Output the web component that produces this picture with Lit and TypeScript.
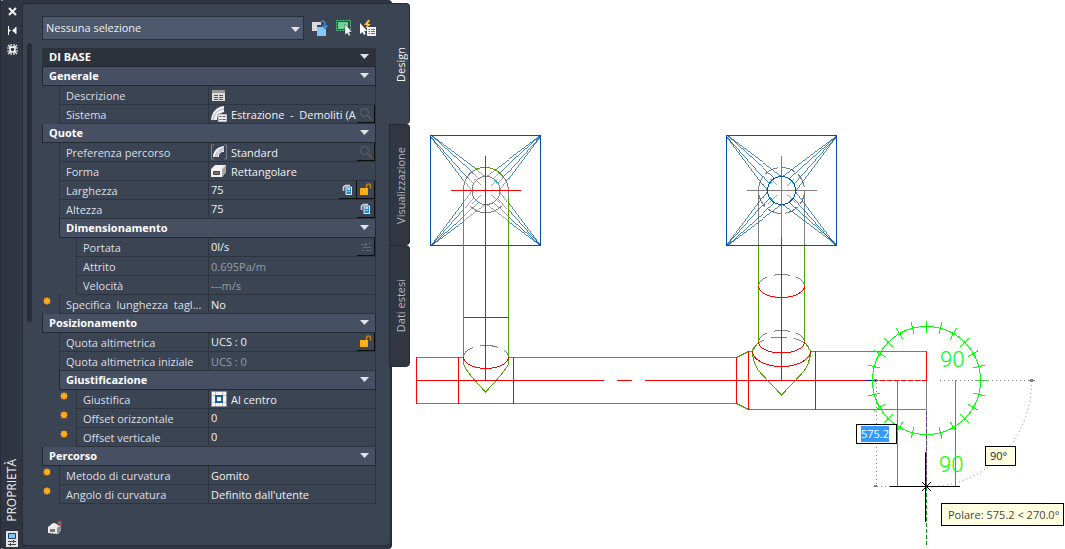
import { LitElement, html, svg, css, nothing } from "lit";
import { customElement, state } from "lit/decorators.js";
import { classMap } from "lit/directives/class-map.js";

type Row = {
  kind: "title" | "section" | "item";
  level: 1 | 2;
  label: string;
  value?: string;
  icon?: string;
  star?: boolean;
  editable?: boolean;
  readonly?: boolean;
  actions?: string[];
};

const ROWS: Row[] = [
  { kind: "title", level: 1, label: "DI BASE" },
  { kind: "section", level: 1, label: "Generale" },
  { kind: "item", level: 1, label: "Descrizione", icon: "sheet" },
  { kind: "item", level: 1, label: "Sistema", value: "Estrazione  -  Demoliti (A", icon: "system", actions: ["search"] },
  { kind: "section", level: 1, label: "Quote" },
  { kind: "item", level: 1, label: "Preferenza percorso", value: "Standard", icon: "route", actions: ["search"] },
  { kind: "item", level: 1, label: "Forma", value: "Rettangolare", icon: "box" },
  { kind: "item", level: 1, label: "Larghezza", value: "75", editable: true, actions: ["calc", "lock"] },
  { kind: "item", level: 1, label: "Altezza", value: "75", editable: true, actions: ["calc"] },
  { kind: "section", level: 2, label: "Dimensionamento" },
  { kind: "item", level: 2, label: "Portata", value: "0l/s", editable: true, actions: ["flow"] },
  { kind: "item", level: 2, label: "Attrito", value: "0.695Pa/m", readonly: true },
  { kind: "item", level: 2, label: "Velocità", value: "---m/s", readonly: true },
  { kind: "item", level: 1, label: "Specifica  lunghezza  tagl...", value: "No", star: true },
  { kind: "section", level: 1, label: "Posizionamento" },
  { kind: "item", level: 1, label: "Quota altimetrica", value: "UCS : 0", editable: true, actions: ["lock"] },
  { kind: "item", level: 1, label: "Quota altimetrica iniziale", value: "UCS : 0", readonly: true },
  { kind: "section", level: 2, label: "Giustificazione" },
  { kind: "item", level: 2, label: "Giustifica", value: "Al centro", icon: "center", star: true },
  { kind: "item", level: 2, label: "Offset orizzontale", value: "0", editable: true, star: true },
  { kind: "item", level: 2, label: "Offset verticale", value: "0", editable: true, star: true },
  { kind: "section", level: 1, label: "Percorso" },
  { kind: "item", level: 1, label: "Metodo di curvatura", value: "Gomito", star: true },
  { kind: "item", level: 1, label: "Angolo di curvatura", value: "Definito dall'utente", star: true },
];

const ACTION_NAMES: Record<string, string> = {
  search: "Cerca",
  calc: "Calcola",
  lock: "Blocca",
  flow: "Calcola portata",
};

const caret = () => html`<svg width="9" height="5" viewBox="0 0 9 5" aria-hidden="true"><path d="M0 0h9L4.500 5z" fill="#dfe2e8"/></svg>`;

const star = () => html`<svg width="8" height="8" viewBox="0 0 8 8" aria-hidden="true">
  <path d="M4 0v8M0 4h8M1 1l6 6M7 1l-6 6" stroke="#f0861a" stroke-width="1"/><circle cx="4" cy="4" r="3" fill="#ffae1a"/></svg>`;

const icon = (name: string) => {
  switch (name) {
    case "sheet":
      return html`<svg width="16" height="16" viewBox="0 0 16 16" aria-hidden="true"><path d="M1 3h13v11H1z" fill="#dcdcdc"/><path d="M1 3h13v3H1z" fill="#9a9a9a"/><path d="M3 8.500h4M8 8.500h4M3 10.500h4M8 10.500h4M3 12.500h4M8 12.500h4" stroke="#555"/></svg>`;
    case "system":
      return html`<svg width="16" height="16" viewBox="0 0 16 16" aria-hidden="true"><path d="M0 14C1 6 5 1 13 0v6C9 7 6 10 6 14z" fill="#f1f1f1"/><path d="M2 14C3 8 6 4 13 3" fill="none" stroke="#a9adb3"/><path d="M7 8h9v8H7z" fill="#f1f1f1" stroke="#55585e" stroke-width=".6"/><path d="M8.500 10.500h2M11.500 10.500h3M8.500 13.500h2M11.500 13.500h3" stroke="#555"/></svg>`;
    case "route":
      return html`<svg width="16" height="16" viewBox="0 0 16 16" aria-hidden="true"><path d="M3 1H.5v14H3M13 1h2.500v14H13" fill="none" stroke="#777e89"/><path d="M2 13C2 7 6 3 13 2v6c-4 0-5 2-5 5z" fill="#f1f1f1"/><path d="M4 13C5 9 7 6 13 4M6 13c0-3 3-6 7-7" fill="none" stroke="#a0a4ab"/></svg>`;
    case "box":
      return html`<svg width="16" height="16" viewBox="0 0 16 16" aria-hidden="true"><path d="M0 6l4-4h11v7l-4 5H0z" fill="#f1f1f1"/><path d="M11 6l4-4v7l-4 5z" fill="#a6a6a6"/><path d="M2.500 8.500h6v3h-6z" fill="#747474" stroke="#444"/></svg>`;
    case "center":
      return html`<svg width="16" height="16" viewBox="0 0 16 16" aria-hidden="true"><path d="M.5.5h15v15H.5z" fill="#f5f5f5" stroke="#8f8f8f"/><path d="M1 4.500h14M1 11.500h14M4.500 1v14M11.500 1v14" stroke="#c3c3c3"/><path d="M5 5h6v6H5z" fill="#fff" stroke="#17619c" stroke-width="2"/></svg>`;
    case "search":
      return html`<svg width="14" height="14" viewBox="0 0 14 14" aria-hidden="true"><circle cx="5.500" cy="5.500" r="4" fill="none" stroke="#5c636e"/><path d="M8.500 8.500l4 4" stroke="#6b5d55" stroke-width="1.500"/></svg>`;
    case "calc":
      return html`<svg width="11" height="11" viewBox="0 0 11 11" aria-hidden="true"><path d="M1.500 7V3l2-1.500H8" fill="none" stroke="#d2d2d2" stroke-width="1.600"/><path d="M4 3h5.500v7.500H4z" fill="#1e88d8" stroke="#e8f2fa"/><path d="M5.500 5H8" stroke="#fff" stroke-width="1.400"/><path d="M5.500 7.500H8" stroke="#bfe0fa" stroke-dasharray="1 .5"/></svg>`;
    case "lock":
      return html`<svg width="13" height="13" viewBox="0 0 13 13" aria-hidden="true"><path d="M7.500 6V3a2 2 0 0 1 4 0v2.500" fill="none" stroke="#c9830b" stroke-width="1.500"/><path d="M1 5h8v7H1z" fill="#ffab08"/><path d="M5 7v3" stroke="#ffe0a0"/></svg>`;
    case "flow":
      return html`<svg width="12" height="12" viewBox="0 0 12 12" aria-hidden="true"><path d="M1 3.500h6M5 1.500l2 2-2 2M3 6.500h8M6 9.500h5M2 9.500h2M8.500 2.500H11" fill="none" stroke="#636a75"/></svg>`;
    default:
      return nothing;
  }
};

/** Lines from a diffuser's corners to its round neck. */
const rays = (cx: number, cy: number) => {
  const out: string[] = [];
  for (const sx of [-1, 1])
    for (const sy of [-1, 1])
      for (const a of [0, 30, 60, 90]) {
        const t = (a * Math.PI) / 180;
        out.push(`M${cx + sx * 55} ${cy + sy * 55}L${(cx + sx * 14 * Math.cos(t)).toFixed(1)} ${(cy + sy * 14 * Math.sin(t)).toFixed(1)}`);
      }
  return out.join("");
};

const compassTicks = () => {
  const out: string[] = [];
  for (let a = 0; a < 360; a += 15) {
    if (a === 90 || a === 180) continue;
    const t = (a * Math.PI) / 180;
    out.push(
      `M${(926.5 + 48 * Math.cos(t)).toFixed(1)} ${(380.5 + 48 * Math.sin(t)).toFixed(1)}L${(926.5 + 60 * Math.cos(t)).toFixed(1)} ${(380.5 + 60 * Math.sin(t)).toFixed(1)}`
    );
  }
  return out.join("");
};

const neckMarks = (cx: number) =>
  `M${cx - 5} 185l-7-6M${cx + 5} 185l7-6M${cx - 5} 195l-9 8M${cx + 5} 195l9 8`;

const drawing = () => svg`
  <defs>
    <clipPath id="riser"><path d="M464 245V190a22 22 0 0 1 44 0v55z"/></clipPath>
  </defs>
  <g class="line" shape-rendering="crispEdges">
    <!-- left diffuser -->
    <g class="blue"><path d="M430.500 135.500h110v110h-110z"/><path class="fine" d="${rays(485.5, 190.5)}"/></g>
    <path d="M464 245V190a22 22 0 0 1 44 0v55z" fill="#fff" stroke="none"/>
    <g class="gray">
      <path class="fine" d="${rays(485.5, 190.5)}" clip-path="url(#riser)"/>
      <path class="fine" d="${neckMarks(485.5)}"/>
      <circle cx="486" cy="190.500" r="14"/>
      <path d="M463.500 198V190a22.500 22.500 0 0 1 13-21M508.500 198V190a22.500 22.500 0 0 0-6-14M470 206q15 14 32 0"/>
      <path d="M463.500 357a22.500 11.500 0 0 1 45 0" stroke-dasharray="14 7 18 7"/>
    </g>
    <path class="cyan" d="M478 202l4 2M494 180l3 3M489 204l4-1"/>
    <g class="green">
      <path d="M476.500 169a22.500 22.500 0 0 1 26 7M463.500 198V364q2 7 22 28q20-21 23-28V198"/>
      <path d="M416.500 357.500h47M508.500 357.500h228l12-6h4M416.500 403.500h320l12 6h178M810.500 351.500h116"/>
    </g>
    <g class="red">
      <path d="M451 190.500h70M485.500 156v225M463.500 245.500h45M463.500 317.500h45M463.500 357a22.500 11.500 0 0 0 45 0"/>
      <path d="M416.500 357v47M458.500 357v47M513.500 357v47M736.500 357v47M748.500 351v59M815.500 351v59M926.500 351v30"/>
      <path d="M416 380.500h188M617 380.500h15M645 380.500h281"/>
    </g>
    <!-- right diffuser -->
    <g class="gray">
      <path d="M747 190.500h70M781.500 156v82M758.500 190v55M804.500 190v55"/>
      <circle cx="781.500" cy="190.500" r="23" stroke-dasharray="14 4"/>
      <path class="fine" d="${neckMarks(781.5)}"/>
      <path d="M758.500 286a23 11.500 0 0 1 46 0" stroke-dasharray="13 7 16 7"/>
      <path d="M758.500 342a23 11.500 0 0 1 46 0" stroke-dasharray="13 7 16 7"/>
      <path d="M752.500 352a29 15 0 0 1 58 0" stroke-dasharray="18 7 16 7"/>
    </g>
    <g class="blue">
      <path d="M726.500 135.500h110v110h-110z"/><path class="fine" d="${rays(781.5, 190.5)}"/>
      <circle cx="781.500" cy="190.500" r="14"/>
    </g>
    <path class="cyan" d="M770 184l2-3M790 180l3 3M770 197l3 4"/>
    <path class="green" d="M758.500 246v96l-6 9q0 14 9 23l20 21l20-21q9-10 9-23l-6-9v-96"/>
    <path class="red" d="M781.500 237v144M758.500 286a23 11.500 0 0 0 46 0M758.500 342a23 11 0 0 0 46 0M752.500 351a29 15.500 0 0 0 58 0"/>
    <!-- duct being drawn -->
    <path class="green" d="M897.500 380v107M955.500 380v107"/>
    <path class="gray" d="M926.500 381v28"/>
    <path d="M926.500 409v78" stroke="#6a3585"/>
    <path d="M926.500 409v78" stroke="#9b8aa5" stroke-dasharray="2 4"/>
    <path d="M878 380.500h48" stroke="#b58080" stroke-dasharray="2 5"/>
    <path d="M866 380.500h11" stroke="#0000ff"/>
    <!-- polar compass -->
    <g stroke="#00ff00"><circle cx="926.500" cy="380.500" r="54"/><path d="${compassTicks()}"/></g>
    <g class="gray">
      <path d="M876.500 383v104M877 486.500h14M940 380.500h91" stroke-dasharray="1 3"/>
      <path d="M1031.500 381a105 105 0 0 1-105 106" stroke-dasharray="1 3" shape-rendering="auto"/>
      <path d="M874.500 379.500h2v2h-2zM1030.500 379.500h2v2h-2zM874.500 485.500h2v1h-2zM1028 380.500h7"/>
    </g>
    <path d="M926.500 487v58" stroke="#009c00" stroke-dasharray="4 2"/>
    <path d="M925.500 452v70M890 486.500h70M922 482l9 9M931 482l-9 9" stroke="#000"/>
  </g>
  <g class="polar-text"><text x="940" y="367">90</text><text x="939" y="472">90</text></g>
`;

@customElement("app-root")
export class AppRoot extends LitElement {
  @state() private tab = 0;

  static styles = css`
    :host {
      display: flex;
      min-height: 100vh;
      background: #fff;
      color: #dcdfe5;
      font: 11px/18px "Open Sans", "Noto Sans", sans-serif;
      overflow: hidden;
    }
    * { box-sizing: border-box; }
    button, input, select { font: inherit; color: inherit; background: none; border: 0; margin: 0; padding: 0; border-radius: 0; }
    button { cursor: pointer; }
    svg { display: block; flex: none; }

    .palette { flex: none; display: flex; align-items: stretch; background: #2f3541; border-radius: 4px; border-right: 2px solid #262b36; width: 392px; }
    .titlebar { flex: none; width: 22px; display: flex; flex-direction: column; align-items: center; border-left: 1px solid #262b36; padding: 2px 0 2px 1px; }
    .titlebar button { width: 20px; height: 19px; display: grid; place-items: center; color: #f4f4f4; }
    .spacer { flex: 1; }
    .vertical { writing-mode: vertical-rl; transform: rotate(180deg); }
    .titlebar h1 { margin: 0 0 9px; font-size: 12px; line-height: 16px; font-weight: 400; color: #f0f1f3; }
    .body { flex: 1; min-width: 0; display: flex; background: #3b4453; border: 1px solid #262b36; border-right: 0; border-radius: 4px; margin: 3px 0; padding: 0 14px 0 4px; }
    .scroll { flex: none; width: 15px; padding-top: 39px; }
    .thumb { width: 5px; height: 279px; border-radius: 3px; background: #282d38; }
    .content { flex: 1; min-width: 0; display: flex; flex-direction: column; align-items: stretch; }

    .picker { display: flex; align-items: center; gap: 8px; margin: 12px 0 8px; }
    .combo { flex: 1; display: grid; align-items: center; background: #4c586b; border: 1px solid #2a303b; height: 24px; }
    .combo select { grid-area: 1 / 1; width: 100%; appearance: none; padding: 0 3px; height: 22px; color: #edeff2; }
    .combo svg { grid-area: 1 / 1; justify-self: end; margin: 2px 3px 0; pointer-events: none; }

    table { table-layout: fixed; width: 100%; border-collapse: separate; border-spacing: 0; }
    .c-indent { width: 17px; }
    .c-label { width: 132px; }
    td, th { padding: 0; height: 19px; text-align: left; font-weight: 400; white-space: pre; overflow: hidden; }
    .cell { border-bottom: 1px solid #2d333f; border-left: 1px solid #2d333f; }
    th.cell { padding: 2px 0 0 6px; line-height: 16px; }
    td.cell { border-right: 1px solid #2d333f; color: #f0f1f4; }
    .head { border: 1px solid #232833; border-top: 0; background: #474f62; color: #fff; font-weight: 700; }
    .title { background: #2d323d; border-color: #2d323d; border-bottom-color: #232833; }
    .head button { width: 100%; height: 18px; display: flex; align-items: center; justify-content: space-between; padding: 0 6px; font-weight: 700; }
    .head svg { margin-bottom: 2px; }
    .gutter svg { margin: 0 0 8px 1px; }
    .value { display: flex; height: 18px; align-items: center; }
    .value > svg { margin-left: 2px; margin-right: 4px; }
    .value .text { flex: 1; min-width: 0; overflow: hidden; padding-top: 2px; line-height: 16px; }
    .value .plain { padding-left: 2px; }
    .value input { flex: 1; min-width: 0; width: 0; padding-left: 2px; height: 18px; }
    .value.readonly { color: #969da8; }
    .action { flex: none; width: 18px; height: 18px; display: grid; place-items: center; border: solid #0b0d10; border-width: 0 1px 1px 0; }
    .foot { padding: 16px 0 0 6px; }

    .tabs { flex: none; display: flex; flex-direction: column; margin: 3px 0 0 -3px; z-index: 1; align-self: flex-start; }
    .tab { width: 21px; height: 121px; display: grid; place-items: center; background: #303642; border: 1px solid #262b36; border-bottom-width: 0; border-radius: 0 4px 4px 0; color: #b4b9c2; padding-left: 2px; }
    .tab:last-child { border-bottom-width: 1px; height: 122px; }
    .tab.active { background: #3b4453; border-left-color: #3b4453; color: #f4f5f7; }

    .canvas { position: relative; flex: 1; min-width: 0; color: #222; }
    .line { fill: none; stroke-width: 1; }
    .fine { stroke-width: 0.7; }
    .blue { stroke: #0052a5; }
    .gray { stroke: #808080; }
    .cyan { stroke: #00bfff; }
    .green { stroke: #4fa600; }
    .red { stroke: #ff0000; }
    .polar-text { font: 300 22px Roboto, sans-serif; fill: #00ff00; stroke: none; }
    .tag { position: absolute; border: 1px solid #000; background: #ffffe1; line-height: 18px; white-space: nowrap; }
    .length { left: 446px; top: 424px; width: 41px; height: 20px; background: #fff; padding: 1px 4px; }
    .length input { display: block; width: 28px; height: 16px; line-height: 16px; background: #3399ff; color: #fff; }
    .angle { left: 575px; top: 446px; width: 31px; height: 20px; padding: 0 4px; }
    .hint { left: 531px; top: 503px; height: 23px; line-height: 21px; padding: 0 4px 0 6px; color: #454545; }
  `;

  private renderSection(r: Row) {
    return html`<tr>
      ${r.level === 2 ? html`<td></td>` : nothing}
      <th class=${classMap({ head: true, title: r.kind === "title" })} colspan=${r.level === 2 ? 3 : 4} scope="rowgroup"><button aria-expanded="true">${r.label}${caret()}</button></th>
    </tr>`;
  }

  private renderValue(r: Row, i: number) {
    return html`<div class=${classMap({ value: true, readonly: !!r.readonly })}>${r.icon ? icon(r.icon) : nothing}${r.editable
      ? html`<input type="text" aria-labelledby="p${i}" .value=${r.value ?? ""} />`
      : html`<span class=${classMap({ text: true, plain: !r.icon })}>${r.value ?? ""}</span>`}${(r.actions ?? []).map(
      (a) => html`<button class="action" aria-label=${ACTION_NAMES[a]}>${icon(a)}</button>`
    )}</div>`;
  }

  private renderItem(r: Row, i: number) {
    return html`<tr>
      ${r.level === 2 ? html`<td></td>` : nothing}
      <td class="gutter">${r.star ? star() : nothing}</td>
      <th class="cell" scope="row" colspan=${r.level === 2 ? 1 : 2} id="p${i}">${r.label}</th>
      <td class="cell">${this.renderValue(r, i)}</td>
    </tr>`;
  }

  render() {
    return html`
      <aside class="palette">
        <div class="titlebar">
          <button aria-label="Chiudi"><svg width="9" height="9" viewBox="0 0 9 9"><path d="M1 1l7 7M8 1L1 8" stroke="currentColor" stroke-width="2"/></svg></button>
          <button aria-label="Nascondi automaticamente"><svg width="9" height="9" viewBox="0 0 9 9"><path d="M.5 0v9M8 1v7" stroke="currentColor"/><path d="M1 3l2 1.500L1 6zM8 1v7L4 4.500z" fill="currentColor"/></svg></button>
          <button aria-label="Impostazioni"><svg width="11" height="11" viewBox="0 0 11 11"><circle cx="5.500" cy="5.500" r="2.500" fill="none" stroke="currentColor" stroke-width="1.500"/><path d="M4 0v3M7 0v3M4 8v3M7 8v3M0 4h3M0 7h3M8 4h3M8 7h3M1 1l2 2M8 8l2 2M10 1L8 3M3 8l-2 2" stroke="currentColor" stroke-width="1.200"/></svg></button>
          <span class="spacer"></span>
          <h1 class="vertical">PROPRIETÀ</h1>
          <svg width="12" height="16" viewBox="0 0 12 16" aria-hidden="true"><path d="M0 0h12v16H0z" fill="#e2e3e5"/><path d="M2.500 2.500h7v5h-7z" fill="#7fc4f5" stroke="#23455f"/><path d="M2 10.500h8M2 13.500h8M7.500 9v3M4.500 12v3" stroke="#444"/></svg>
        </div>
        <div class="body">
          <div class="scroll"><div class="thumb"></div></div>
          <div class="content">
            <div class="picker">
              <div class="combo">
                <select aria-label="Selezione"><option>Nessuna selezione</option></select>
                ${caret()}
              </div>
              <button aria-label="Attiva/disattiva PICKADD"><svg width="16" height="16" viewBox="0 0 16 16"><path d="M0 2h9v3H5v6H0z" fill="#d9dade"/><path d="M5 7h9v9H5z" fill="#85c6f7"/><path d="M9 1q4 0 4 3v4M10.500 5.500L13 8.500l2.500-3" fill="none" stroke="#2f8fe0" stroke-width="1.600"/></svg></button>
              <button aria-label="Seleziona oggetti"><svg width="16" height="16" viewBox="0 0 16 16"><path d="M.5.5h14v10H.5z" fill="none" stroke="#4bd07e" stroke-dasharray="2 1"/><path d="M2 2h10v7H2z" fill="#72cf98"/><path d="M9 4v11l2.300-2 1.500 3 1.700-1-1.500-3H16z" fill="#fff" stroke="#3b4453" stroke-width=".5"/></svg></button>
              <button aria-label="Selezione rapida"><svg width="16" height="16" viewBox="0 0 16 16"><path d="M8 0L4 5h3L5 9l6-5H8l2-4z" fill="#ffc04d"/><path d="M0 3v11l2.500-2 1.500 3 1.700-1-1.500-3H7z" fill="#fff"/><path d="M7 7h9v9H7z" fill="#f4f4f4"/><path d="M8.500 9.500h1.500M11 9.500h4M8.500 11.500h1.500M11 11.500h4M8.500 13.500h1.500M11 13.500h4" stroke="#2a7fc4"/></svg></button>
            </div>
            <table aria-label="Proprietà">
              <colgroup><col class="c-indent" /><col class="c-indent" /><col class="c-label" /><col /></colgroup>
              <tbody>
                ${ROWS.map((r, i) => (r.kind === "item" ? this.renderItem(r, i) : this.renderSection(r)))}
              </tbody>
            </table>
            <div class="foot">
              <button aria-label="Aggiungi condotto"><svg width="16" height="15" viewBox="0 0 16 15"><path d="M0 7l4-3h9v6l-3 4-10-1z" fill="#ececec"/><path d="M9 8l4-3v5l-4 4z" fill="#8e8e8e"/><path d="M2 9h5v3H2z" fill="#777"/><path d="M3 5q3-4 6 0z" fill="#fff"/><circle cx="11.500" cy="3" r="2" fill="#3b8f96" stroke="#a33b46" stroke-width="1.400"/></svg></button>
            </div>
          </div>
        </div>
      </aside>
      <div class="tabs" role="tablist">
        ${["Design", "Visualizzazione", "Dati estesi"].map(
          (t, i) => html`<button role="tab" aria-selected=${this.tab === i ? "true" : "false"} class=${classMap({ tab: true, active: this.tab === i })} @click=${() => (this.tab = i)}><span class="vertical">${t}</span></button>`
        )}
      </div>
      <main class="canvas">
        <svg width="655" height="549" viewBox="410 0 655 549" role="img" aria-label="Disegno dei condotti">${drawing()}</svg>
        <div class="tag length"><input type="text" aria-label="Lunghezza" .value=${"575.2"} /></div>
        <div class="tag angle">90°</div>
        <div class="tag hint">Polare: 575.2 &lt; 270.0°</div>
      </main>
    `;
  }
}
